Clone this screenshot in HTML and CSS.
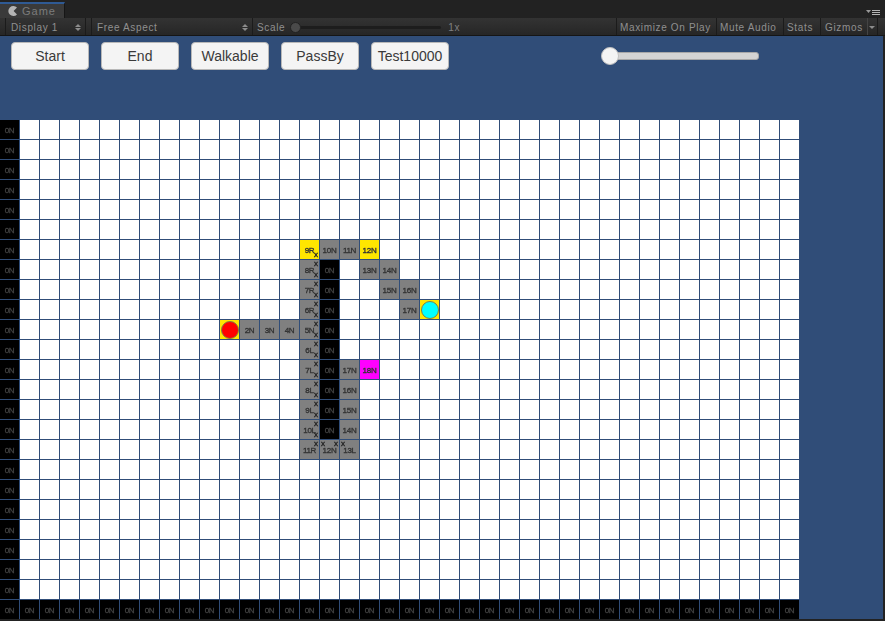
FILE: index.html
```html
<!DOCTYPE html>
<html lang="en">
<head>
  <meta charset="UTF-8">
  <title>Game</title>
  <link rel="stylesheet" href="styles.css">
</head>
<body>
  <div class="tabbar">
    <div class="tab">
      <svg class="tab-icon" width="10" height="10" viewBox="0 0 10 10">
        <path d="M9 1.6 A5 5 0 1 0 9 8.4 L5.6 5 Z" fill="#b4b4b4"/>
      </svg>
      <span>Game</span>
    </div>
    <svg class="tab-menu" width="16" height="8" viewBox="0 0 16 8">
      <path d="M0 2h5L2.5 5z" fill="#9a9a9a"/>
      <path d="M6 2h8v1H6zM6 4h8v1H6zM6 6h8v1H6z" fill="#b4b4b4"/>
    </svg>
  </div>

  <div class="toolbar">
    <div class="tool tool-display">Display 1<span class="updown"></span></div>
    <div class="tool tool-aspect">Free Aspect<span class="updown"></span></div>
    <div class="tool tool-scale">
      <span>Scale</span>
      <span class="scale-track"><span class="scale-thumb"></span></span>
      <span class="scale-value">1x</span>
    </div>
    <div class="tool tool-max">Maximize On Play</div>
    <div class="tool tool-mute">Mute Audio</div>
    <div class="tool tool-stats">Stats</div>
    <div class="tool tool-gizmos">Gizmos<span class="gizmo-arrow"></span></div>
  </div>

  <main class="game">
    <div class="controls">
      <button class="btn">Start</button>
      <button class="btn">End</button>
      <button class="btn">Walkable</button>
      <button class="btn">PassBy</button>
      <button class="btn">Test10000</button>
      <div class="slider"><span class="slider-thumb"></span></div>
    </div>
    <div class="grid" id="grid"></div>
  </main>

  <script src="script.js"></script>
</body>
</html>
```

FILE: styles.css
```css
* {
  margin: 0;
  padding: 0;
  box-sizing: border-box;
}
html, body {
  width: 885px;
  height: 621px;
  overflow: hidden;
}
body {
  background: #222222;
  font-family: "Liberation Sans", Arial, sans-serif;
  display: flex;
  flex-direction: column;
}
/* Tabs */
.tabbar {
  height: 18px;
  background: #222222;
  display: flex;
  justify-content: space-between;
  align-items: flex-end;
}
.tab {
  width: 65px;
  height: 16px;
  background: #3a3a3a;
  border-top: 2px solid #2f5a94;
  border-right: 1px solid #161616;
  display: flex;
  align-items: center;
  padding-left: 8px;
  gap: 4px;
  color: #7c7c7c;
  font-size: 11px;
  letter-spacing: 1px;
}
.tab-menu {
  margin: 0 3px 2px 0;
}
/* Toolbar */
.toolbar {
  height: 18px;
  background: linear-gradient(#333333, #262626);
  border-bottom: 1px solid #151515;
  display: flex;
  padding-left: 5px;
  color: #909090;
  font-size: 10px;
  letter-spacing: 0.65px;
}
.tool {
  height: 17px;
  display: flex;
  align-items: center;
  border-left: 1px solid #1b1b1b;
  padding-top: 2px;
  padding-left: 5px;
  position: relative;
  white-space: nowrap;
}
.tool-display { width: 81px; border-right: 1px solid #1b1b1b; margin-right: 5px; }
.tool-aspect { width: 161px; }
.tool-scale { width: 364px; padding-left: 4px; gap: 5px; }
.tool-max { width: 100px; padding-left: 3px; }
.tool-mute { width: 67px; padding-left: 3px; }
.tool-stats { width: 37px; padding-left: 3px; }
.tool-gizmos { width: 58px; padding-left: 4px; border-right: 1px solid #1b1b1b; }
.updown {
  position: absolute;
  right: 4px;
  top: 6px;
  width: 0;
  height: 0;
  border-left: 3px solid transparent;
  border-right: 3px solid transparent;
  border-bottom: 3px solid #8c8c8c;
}
.updown::after {
  content: "";
  position: absolute;
  left: -3px;
  top: 4px;
  width: 0;
  height: 0;
  border-left: 3px solid transparent;
  border-right: 3px solid transparent;
  border-top: 3px solid #8c8c8c;
}
.scale-track {
  width: 146px;
  height: 3px;
  background: #1d1d1d;
  border-radius: 2px;
  position: relative;
  margin-left: 5px;
}
.scale-thumb {
  position: absolute;
  left: -5px;
  top: -4px;
  width: 11px;
  height: 11px;
  border-radius: 50%;
  background: #4a4a4a;
  border: 1px solid #222222;
}
.scale-value {
  margin-left: 2px;
  color: #808080;
}
.gizmo-arrow {
  position: absolute;
  right: 0;
  top: 0;
  width: 10px;
  height: 17px;
  border-left: 1px solid #444444;
}
.gizmo-arrow::after {
  content: "";
  position: absolute;
  left: 1px;
  top: 8px;
  width: 0;
  height: 0;
  border-left: 3px solid transparent;
  border-right: 3px solid transparent;
  border-top: 3px solid #8c8c8c;
}
/* Game view */
.game {
  width: 883px;
  height: 583px;
  background: #304d78;
  display: flex;
  flex-direction: column;
}
.controls {
  height: 84px;
  padding: 6px 0 0 11px;
  display: flex;
  align-items: flex-start;
  gap: 12px;
}
.btn {
  width: 78px;
  height: 28px;
  background: #f4f4f4;
  border: 1px solid #b8b8b8;
  border-radius: 4px;
  color: #3a3a3a;
  font-family: inherit;
  font-size: 14px;
}
.slider {
  width: 148px;
  height: 8px;
  margin: 10px 0 0 150px;
  background: #d4d4d4;
  border: 1px solid #a8a8a8;
  border-radius: 3px;
  position: relative;
}
.slider-thumb {
  position: absolute;
  left: -11px;
  top: -6px;
  width: 18px;
  height: 18px;
  border-radius: 50%;
  background: #f4f4f4;
  border: 1px solid #c0c0c0;
}
/* Grid */
.grid {
  width: 799px;
  display: grid;
  grid-template-columns: repeat(40, 19px);
  grid-auto-rows: 19px;
  gap: 1px;
  will-change: transform;
}
.cell {
  background: #ffffff;
  position: relative;
  display: flex;
  align-items: center;
  justify-content: center;
  padding-top: 1px;
  font-size: 8px;
  letter-spacing: -0.3px;
  -webkit-text-stroke: 0.35px currentColor;
  color: #333333;
}
.blocked {
  background: #000000;
  color: #404040;
}
.path {
  background: #808080;
}
.turn {
  background: #ffe600;
}
.mark {
  background: #ff00ff;
}
.dot {
  width: 18px;
  height: 18px;
  margin: 0 0 0 1px;
  border-radius: 50%;
  border: 1px solid #808040;
}
.dot-red {
  background: #ff0000;
}
.dot-cyan {
  background: #00ffff;
}
.x {
  position: absolute;
  font-size: 8px;
  line-height: 5px;
  letter-spacing: 0;
  color: #222222;
}
.x-tr { top: 1px; right: 1px; }
.x-br { bottom: 2px; right: 1px; }
.x-tl { top: 1px; left: 1px; }
```

FILE: script.js
```js
// Размер сетки и занятые клетки
const COLS = 40;
const ROWS = 25;

// row, col, класс, подпись, крестики, кружок
const cells = [
  [6, 15, 'turn', '9R', ['br']],
  [6, 16, 'path', '10N'],
  [6, 17, 'path', '11N'],
  [6, 18, 'turn', '12N'],
  [7, 15, 'path', '8R', ['tr', 'br']],
  [7, 16, 'blocked', '0N'],
  [7, 18, 'path', '13N'],
  [7, 19, 'path', '14N'],
  [8, 15, 'path', '7R', ['tr', 'br']],
  [8, 16, 'blocked', '0N'],
  [8, 19, 'path', '15N'],
  [8, 20, 'path', '16N'],
  [9, 15, 'path', '6R', ['tr', 'br']],
  [9, 16, 'blocked', '0N'],
  [9, 20, 'path', '17N'],
  [9, 21, 'turn', '', [], 'dot-cyan'],
  [10, 11, 'turn', '', [], 'dot-red'],
  [10, 12, 'path', '2N'],
  [10, 13, 'path', '3N'],
  [10, 14, 'path', '4N'],
  [10, 15, 'path', '5N', ['tr', 'br']],
  [10, 16, 'blocked', '0N'],
  [11, 15, 'path', '6L', ['tr', 'br']],
  [11, 16, 'blocked', '0N'],
  [12, 15, 'path', '7L', ['tr', 'br']],
  [12, 16, 'blocked', '0N'],
  [12, 17, 'path', '17N'],
  [12, 18, 'mark', '18N'],
  [13, 15, 'path', '8L', ['tr', 'br']],
  [13, 16, 'blocked', '0N'],
  [13, 17, 'path', '16N'],
  [14, 15, 'path', '9L', ['tr', 'br']],
  [14, 16, 'blocked', '0N'],
  [14, 17, 'path', '15N'],
  [15, 15, 'path', '10L', ['tr', 'br']],
  [15, 16, 'blocked', '0N'],
  [15, 17, 'path', '14N'],
  [16, 15, 'path', '11R', ['tr']],
  [16, 16, 'path', '12N', ['tl', 'tr']],
  [16, 17, 'path', '13L', ['tl']],
];

const lookup = {};
cells.forEach(c => { lookup[c[0] + ':' + c[1]] = c; });

const grid = document.getElementById('grid');
for (let row = 0; row < ROWS; row++) {
  for (let col = 0; col < COLS; col++) {
    const cell = document.createElement('div');
    cell.className = 'cell';
    const data = lookup[row + ':' + col];
    if (col === 0 || row === ROWS - 1) {
      cell.classList.add('blocked');
      cell.textContent = '0N';
    } else if (data) {
      cell.classList.add(data[2]);
      cell.textContent = data[3];
      (data[4] || []).forEach(pos => {
        const x = document.createElement('span');
        x.className = 'x x-' + pos;
        x.textContent = 'x';
        cell.appendChild(x);
      });
      if (data[5]) {
        const dot = document.createElement('span');
        dot.className = 'dot ' + data[5];
        cell.appendChild(dot);
      }
    }
    grid.appendChild(cell);
  }
}
```
